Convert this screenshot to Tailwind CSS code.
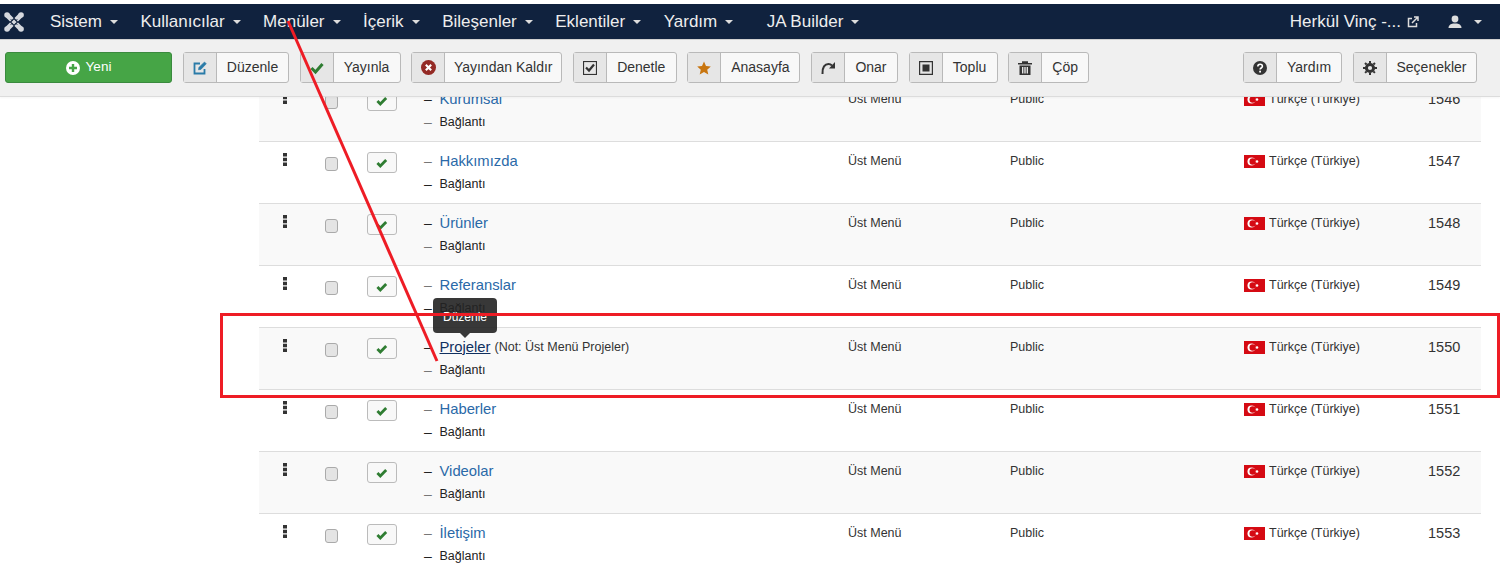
<!DOCTYPE html>
<html lang="tr">
<head>
    <meta charset="UTF-8">
    <title>Menüler</title>
    <script src="https://cdn.jsdelivr.net/npm/@tailwindcss/browser@4"></script>
</head>
<body class="relative h-[574px] overflow-hidden bg-white font-['Liberation_Sans',Arial,sans-serif] text-[14px] text-[#333]">
    <!-- Top bar -->
    <nav class="mt-[4px] flex h-[36px] items-center border-b border-[#d0d0d0] bg-[#10223e] text-[17px] text-[#eee]">
        <svg class="ml-[4px] h-[20px] w-[20px]" viewBox="0 0 20 20" fill="none" stroke="#d5d8de" stroke-linecap="round">
            <path d="M4 4 L16 16 M16 4 L4 16" stroke-width="5"/>
            <path d="M3 3h.1M17 3h.1M3 17h.1M17 17h.1" stroke-width="5.500"/>
            <path d="M10 6.500L13.500 10 10 13.500 6.500 10z" stroke="#10223e" stroke-width="1.200"/>
            <path d="M7 7.500l1 1M13 7.500l-1 1M7 12.500l1-1M13 12.500l-1-1" stroke="#10223e" stroke-width="1"/>
        </svg>
        <div class="ml-[26px] flex items-center gap-[22.500px]">
            <span class="flex items-center gap-[8px]">Sistem <i class="block h-0 w-0 border-x-4 border-t-4 border-x-transparent border-t-[#ddd]"></i></span>
            <span class="flex items-center gap-[8px]">Kullanıcılar <i class="block h-0 w-0 border-x-4 border-t-4 border-x-transparent border-t-[#ddd]"></i></span>
            <span class="flex items-center gap-[8px]">Menüler <i class="block h-0 w-0 border-x-4 border-t-4 border-x-transparent border-t-[#ddd]"></i></span>
            <span class="flex items-center gap-[8px]">İçerik <i class="block h-0 w-0 border-x-4 border-t-4 border-x-transparent border-t-[#ddd]"></i></span>
            <span class="flex items-center gap-[8px]">Bileşenler <i class="block h-0 w-0 border-x-4 border-t-4 border-x-transparent border-t-[#ddd]"></i></span>
            <span class="flex items-center gap-[8px]">Eklentiler <i class="block h-0 w-0 border-x-4 border-t-4 border-x-transparent border-t-[#ddd]"></i></span>
            <span class="flex items-center gap-[8px]">Yardım <i class="block h-0 w-0 border-x-4 border-t-4 border-x-transparent border-t-[#ddd]"></i></span>
            <span class="ml-[11px] flex items-center gap-[8px]">JA Builder <i class="block h-0 w-0 border-x-4 border-t-4 border-x-transparent border-t-[#ddd]"></i></span>
        </div>
        <div class="ml-auto flex items-center pr-[18px]">
            <span>Herkül Vinç -...</span>
            <svg class="ml-[6px] h-[12px] w-[12px]" viewBox="0 0 12 12" fill="none" stroke="#ddd" stroke-width="1.500"><path d="M9.500 7v3.500h-8v-8H5"/><path d="M5 7l5.500-5.500M7 1h4v4"/></svg>
            <svg class="ml-[29px] h-[14px] w-[14px]" viewBox="0 0 14 14" fill="#ddd"><circle cx="7" cy="4" r="3.400"/><path d="M0.500 13c0-3 2.500-4 4.500-4.500h4c2 .5 4.500 1.500 4.500 4.500z"/></svg>
            <i class="ml-[12px] block h-0 w-0 border-x-4 border-t-4 border-x-transparent border-t-[#ddd]"></i>
        </div>
    </nav>

    <!-- Toolbar -->
    <div class="relative z-10 flex h-[57px] items-center border-b border-[#dcdcdc] bg-[#f0f0f0] pb-[1px] pl-[5px] pr-[23px] shadow-[0_1px_2px_rgba(0,0,0,0.04)]">
        <button class="mr-[11px] flex h-[31px] w-[167px] items-center justify-center gap-[6px] rounded-[3px] border border-[#3a8a3e] bg-[#46a546] text-[13.500px] text-white">
            <svg class="h-[14px] w-[14px]" viewBox="0 0 14 14"><circle cx="7" cy="7" r="7" fill="#fff"/><path d="M7 3v8M3 7h8" stroke="#46a546" stroke-width="2.400"/></svg>Yeni
        </button>
        <div class="flex gap-[10.600px]">
            <button class="flex h-[31px] w-[106px] items-center rounded-[3px] border border-[#b9b9b9] bg-[#f8f8f8]"><span class="flex h-full w-[33px] shrink-0 items-center justify-center border-r border-[#b9b9b9] bg-[#e6e6e6]"><svg class="h-[14px] w-[14px]" viewBox="0 0 14 14" fill="none" stroke="#2a7ba8" stroke-width="1.800"><path d="M11.500 8v4.500h-10v-10H7"/><path d="M5.500 8.800l.4-2.400 5.600-5.400 1.800 1.800-5.400 5.600z" fill="#2a7ba8" stroke-width=".6"/></svg></span><span class="grow text-center">Düzenle</span></button>
            <button class="flex h-[31px] w-[101px] items-center rounded-[3px] border border-[#b9b9b9] bg-[#f8f8f8]"><span class="flex h-full w-[33px] shrink-0 items-center justify-center border-r border-[#b9b9b9] bg-[#e6e6e6]"><svg class="h-[14px] w-[14px]" viewBox="0 0 14 14" fill="none" stroke="#2f7d32" stroke-width="3"><path d="M1.500 7l4 4 7-8"/></svg></span><span class="grow text-center">Yayınla</span></button>
            <button class="flex h-[31px] w-[151px] items-center rounded-[3px] border border-[#b9b9b9] bg-[#f8f8f8]"><span class="flex h-full w-[33px] shrink-0 items-center justify-center border-r border-[#b9b9b9] bg-[#e6e6e6]"><svg class="h-[15px] w-[15px]" viewBox="0 0 14 14"><circle cx="7" cy="7" r="7" fill="#942a25"/><path d="M4.500 4.500l5 5M9.500 4.500l-5 5" stroke="#fff" stroke-width="2"/></svg></span><span class="grow text-center">Yayından Kaldır</span></button>
            <button class="flex h-[31px] w-[104px] items-center rounded-[3px] border border-[#b9b9b9] bg-[#f8f8f8]"><span class="flex h-full w-[33px] shrink-0 items-center justify-center border-r border-[#b9b9b9] bg-[#e6e6e6]"><svg class="h-[14px] w-[14px]" viewBox="0 0 14 14" fill="none" stroke="#333"><rect x=".5" y=".5" width="13" height="13" stroke-width="1.200"/><path d="M3 6.500l3 3 5-6" stroke-width="2.200"/></svg></span><span class="grow text-center">Denetle</span></button>
            <button class="flex h-[31px] w-[113px] items-center rounded-[3px] border border-[#b9b9b9] bg-[#f8f8f8]"><span class="flex h-full w-[33px] shrink-0 items-center justify-center border-r border-[#b9b9b9] bg-[#e6e6e6]"><svg class="h-[14px] w-[14px]" viewBox="0 0 14 14" fill="#c8750f"><path d="M7 .5l2 4.500 4.800.5-3.600 3.200 1.100 4.800L7 11l-4.300 2.500 1.100-4.800L.2 5.500 5 5z"/></svg></span><span class="grow text-center">Anasayfa</span></button>
            <button class="flex h-[31px] w-[87px] items-center rounded-[3px] border border-[#b9b9b9] bg-[#f8f8f8]"><span class="flex h-full w-[33px] shrink-0 items-center justify-center border-r border-[#b9b9b9] bg-[#e6e6e6]"><svg class="h-[14px] w-[14px]" viewBox="0 0 14 14" fill="none" stroke="#333" stroke-width="2"><path d="M1.500 13C1 6 4 3 7.500 3c1.500 0 2.500.5 3.500 1.500"/><path d="M14 1v6.500H8z" fill="#333" stroke="none"/></svg></span><span class="grow text-center">Onar</span></button>
            <button class="flex h-[31px] w-[89px] items-center rounded-[3px] border border-[#b9b9b9] bg-[#f8f8f8]"><span class="flex h-full w-[33px] shrink-0 items-center justify-center border-r border-[#b9b9b9] bg-[#e6e6e6]"><svg class="h-[14px] w-[14px]" viewBox="0 0 14 14" fill="#333"><path d="M0 0h14v14H0zM1.200 1.200v11.600h11.600V1.200z" fill-rule="evenodd"/><rect x="3.500" y="3.500" width="7" height="7"/></svg></span><span class="grow text-center">Toplu</span></button>
            <button class="flex h-[31px] w-[81px] items-center rounded-[3px] border border-[#b9b9b9] bg-[#f8f8f8]"><span class="flex h-full w-[33px] shrink-0 items-center justify-center border-r border-[#b9b9b9] bg-[#e6e6e6]"><svg class="h-[14px] w-[14px]" viewBox="0 0 14 14" fill="#333"><path d="M0 2h14v1.500H0zM4 .2h6V2H4zM1.500 4.500h11V14h-11zM4 6v6.500h1.400V6zM6.300 6v6.500h1.400V6zM8.600 6v6.500H10V6z" fill-rule="evenodd"/></svg></span><span class="grow text-center">Çöp</span></button>
        </div>
        <div class="ml-auto flex gap-[11px]">
            <button class="flex h-[31px] w-[99px] items-center rounded-[3px] border border-[#b9b9b9] bg-[#f8f8f8]"><span class="flex h-full w-[33px] shrink-0 items-center justify-center border-r border-[#b9b9b9] bg-[#e6e6e6]"><svg class="h-[14px] w-[14px]" viewBox="0 0 14 14"><circle cx="7" cy="7" r="7" fill="#333"/><path d="M4.800 5.500c0-3 4.600-3 4.600-.2 0 1.700-2.300 1.700-2.300 3.200" fill="none" stroke="#fff" stroke-width="1.600"/><rect x="6.200" y="9.700" width="1.800" height="1.800" fill="#fff"/></svg></span><span class="grow text-center">Yardım</span></button>
            <button class="flex h-[31px] w-[124px] items-center rounded-[3px] border border-[#b9b9b9] bg-[#f8f8f8]"><span class="flex h-full w-[33px] shrink-0 items-center justify-center border-r border-[#b9b9b9] bg-[#e6e6e6]"><svg class="h-[14px] w-[14px]" viewBox="0 0 14 14" fill="none" stroke="#333"><circle cx="7" cy="7" r="3.600" stroke-width="3"/><path d="M7 0v14M0 7h14M2 2l10 10M12 2L2 12" stroke-width="2" stroke-dasharray="2.200 9.600 2.200"/></svg></span><span class="grow text-center">Seçenekler</span></button>
        </div>
    </div>

    <!-- Menu items, first row scrolled under the toolbar -->
    <main class="h-[477px] overflow-hidden pl-[259px] pr-[19px]">
        <div id="rows" class="-mt-[17px] text-[12.500px]"></div>
    </main>

    <!-- Tooltip and annotations -->
    <div class="absolute left-[433px] top-[298px] z-20 flex h-[35px] w-[64px] justify-center rounded-[4px] bg-[#222]/90 pt-[10px] text-[12px] text-white">Düzenle<i class="absolute left-[27px] top-[35px] block h-0 w-0 border-x-[5px] border-t-[5px] border-x-transparent border-t-[#222]/90"></i></div>
    <div class="absolute left-[220px] top-[313px] z-30 h-[85px] w-[1280px] border-[3px] border-[#ee1c25]"></div>
    <svg class="absolute left-0 top-0 z-30 h-[574px] w-[1500px]" viewBox="0 0 1500 574"><line x1="288" y1="21" x2="437" y2="361" stroke="#ee1c25" stroke-width="3"/></svg>

    <script>
        var names = [
            ['Kurumsal', 1546], ['Hakkımızda', 1547], ['Ürünler', 1548], ['Referanslar', 1549],
            ['Projeler', 1550], ['Haberler', 1551], ['Videolar', 1552], ['İletişim', 1553]
        ];
        var html = '';
        names.forEach(function (n, i) {
            var active = n[0] === 'Projeler';
            html += '<div class="flex h-[62px] border-b border-[#ddd] ' + (i % 2 === 0 ? 'bg-[#f9f9f9]' : 'bg-white') + '">' +
                '<div class="w-[52px] pl-[24px] pt-[11px]"><svg class="h-[13px] w-[4px]" viewBox="0 0 4 13" fill="#333"><rect width="4" height="3.500"/><rect y="4.750" width="4" height="3.500"/><rect y="9.500" width="4" height="3.500"/></svg></div>' +
                '<div class="w-[55px] pl-[14px] pt-[15px]"><span class="block h-[14px] w-[13px] rounded-[3px] border border-[#aaa] bg-[#e4e4e4]"></span></div>' +
                '<div class="w-[58px] pl-[1px] pt-[10px]"><span class="flex h-[21px] w-[30px] items-center justify-center rounded-[3px] border border-[#bbb] bg-[#f8f8f8]"><svg class="h-[10px] w-[12px]" viewBox="0 0 14 12" fill="none" stroke="#2f7d32" stroke-width="3.400"><path d="M1.500 6l3.500 3.500 7-7"/></svg></span></div>' +
                '<div class="w-[424px] pt-[9px]">' +
                    '<div class="flex h-[20px] items-center"><span class="w-[15.500px] text-[14px] ' + (i % 2 === 0 ? 'text-[#222]' : 'text-[#777]') + '">–</span><a class="text-[14.800px] ' + (active ? 'text-[#10305f] underline' : 'text-[#2a69a8]') + '">' + n[0] + '</a>' + (active ? '<span class="ml-[4px]">(Not: Üst Menü Projeler)</span>' : '') + '</div>' +
                    '<div class="mt-[4px] flex h-[18px] items-center text-[#222]"><span class="w-[15.500px] text-[14px] ' + (i % 2 === 0 ? 'text-[#777]' : 'text-[#222]') + '">–</span>Bağlantı</div>' +
                '</div>' +
                '<div class="w-[162px] pt-[10px]">Üst Menü</div>' +
                '<div class="w-[234px] pt-[10px]">Public</div>' +
                '<div class="flex w-[184px] gap-[4px] pt-[12px]"><svg class="mt-[1px] h-[13px] w-[21px]" viewBox="0 0 21 13"><rect width="21" height="13" fill="#d50a13"/><circle cx="7.500" cy="6.500" r="4" fill="#fff"/><circle cx="8.700" cy="6.500" r="3.200" fill="#d50a13"/><circle cx="13" cy="6.500" r="1.300" fill="#fff"/></svg><span class="-mt-[2px]">Türkçe (Türkiye)</span></div>' +
                '<div class="pt-[9px] text-[14.500px]">' + n[1] + '</div>' +
            '</div>';
        });
        document.getElementById('rows').innerHTML = html;
    </script>
</body>
</html>
